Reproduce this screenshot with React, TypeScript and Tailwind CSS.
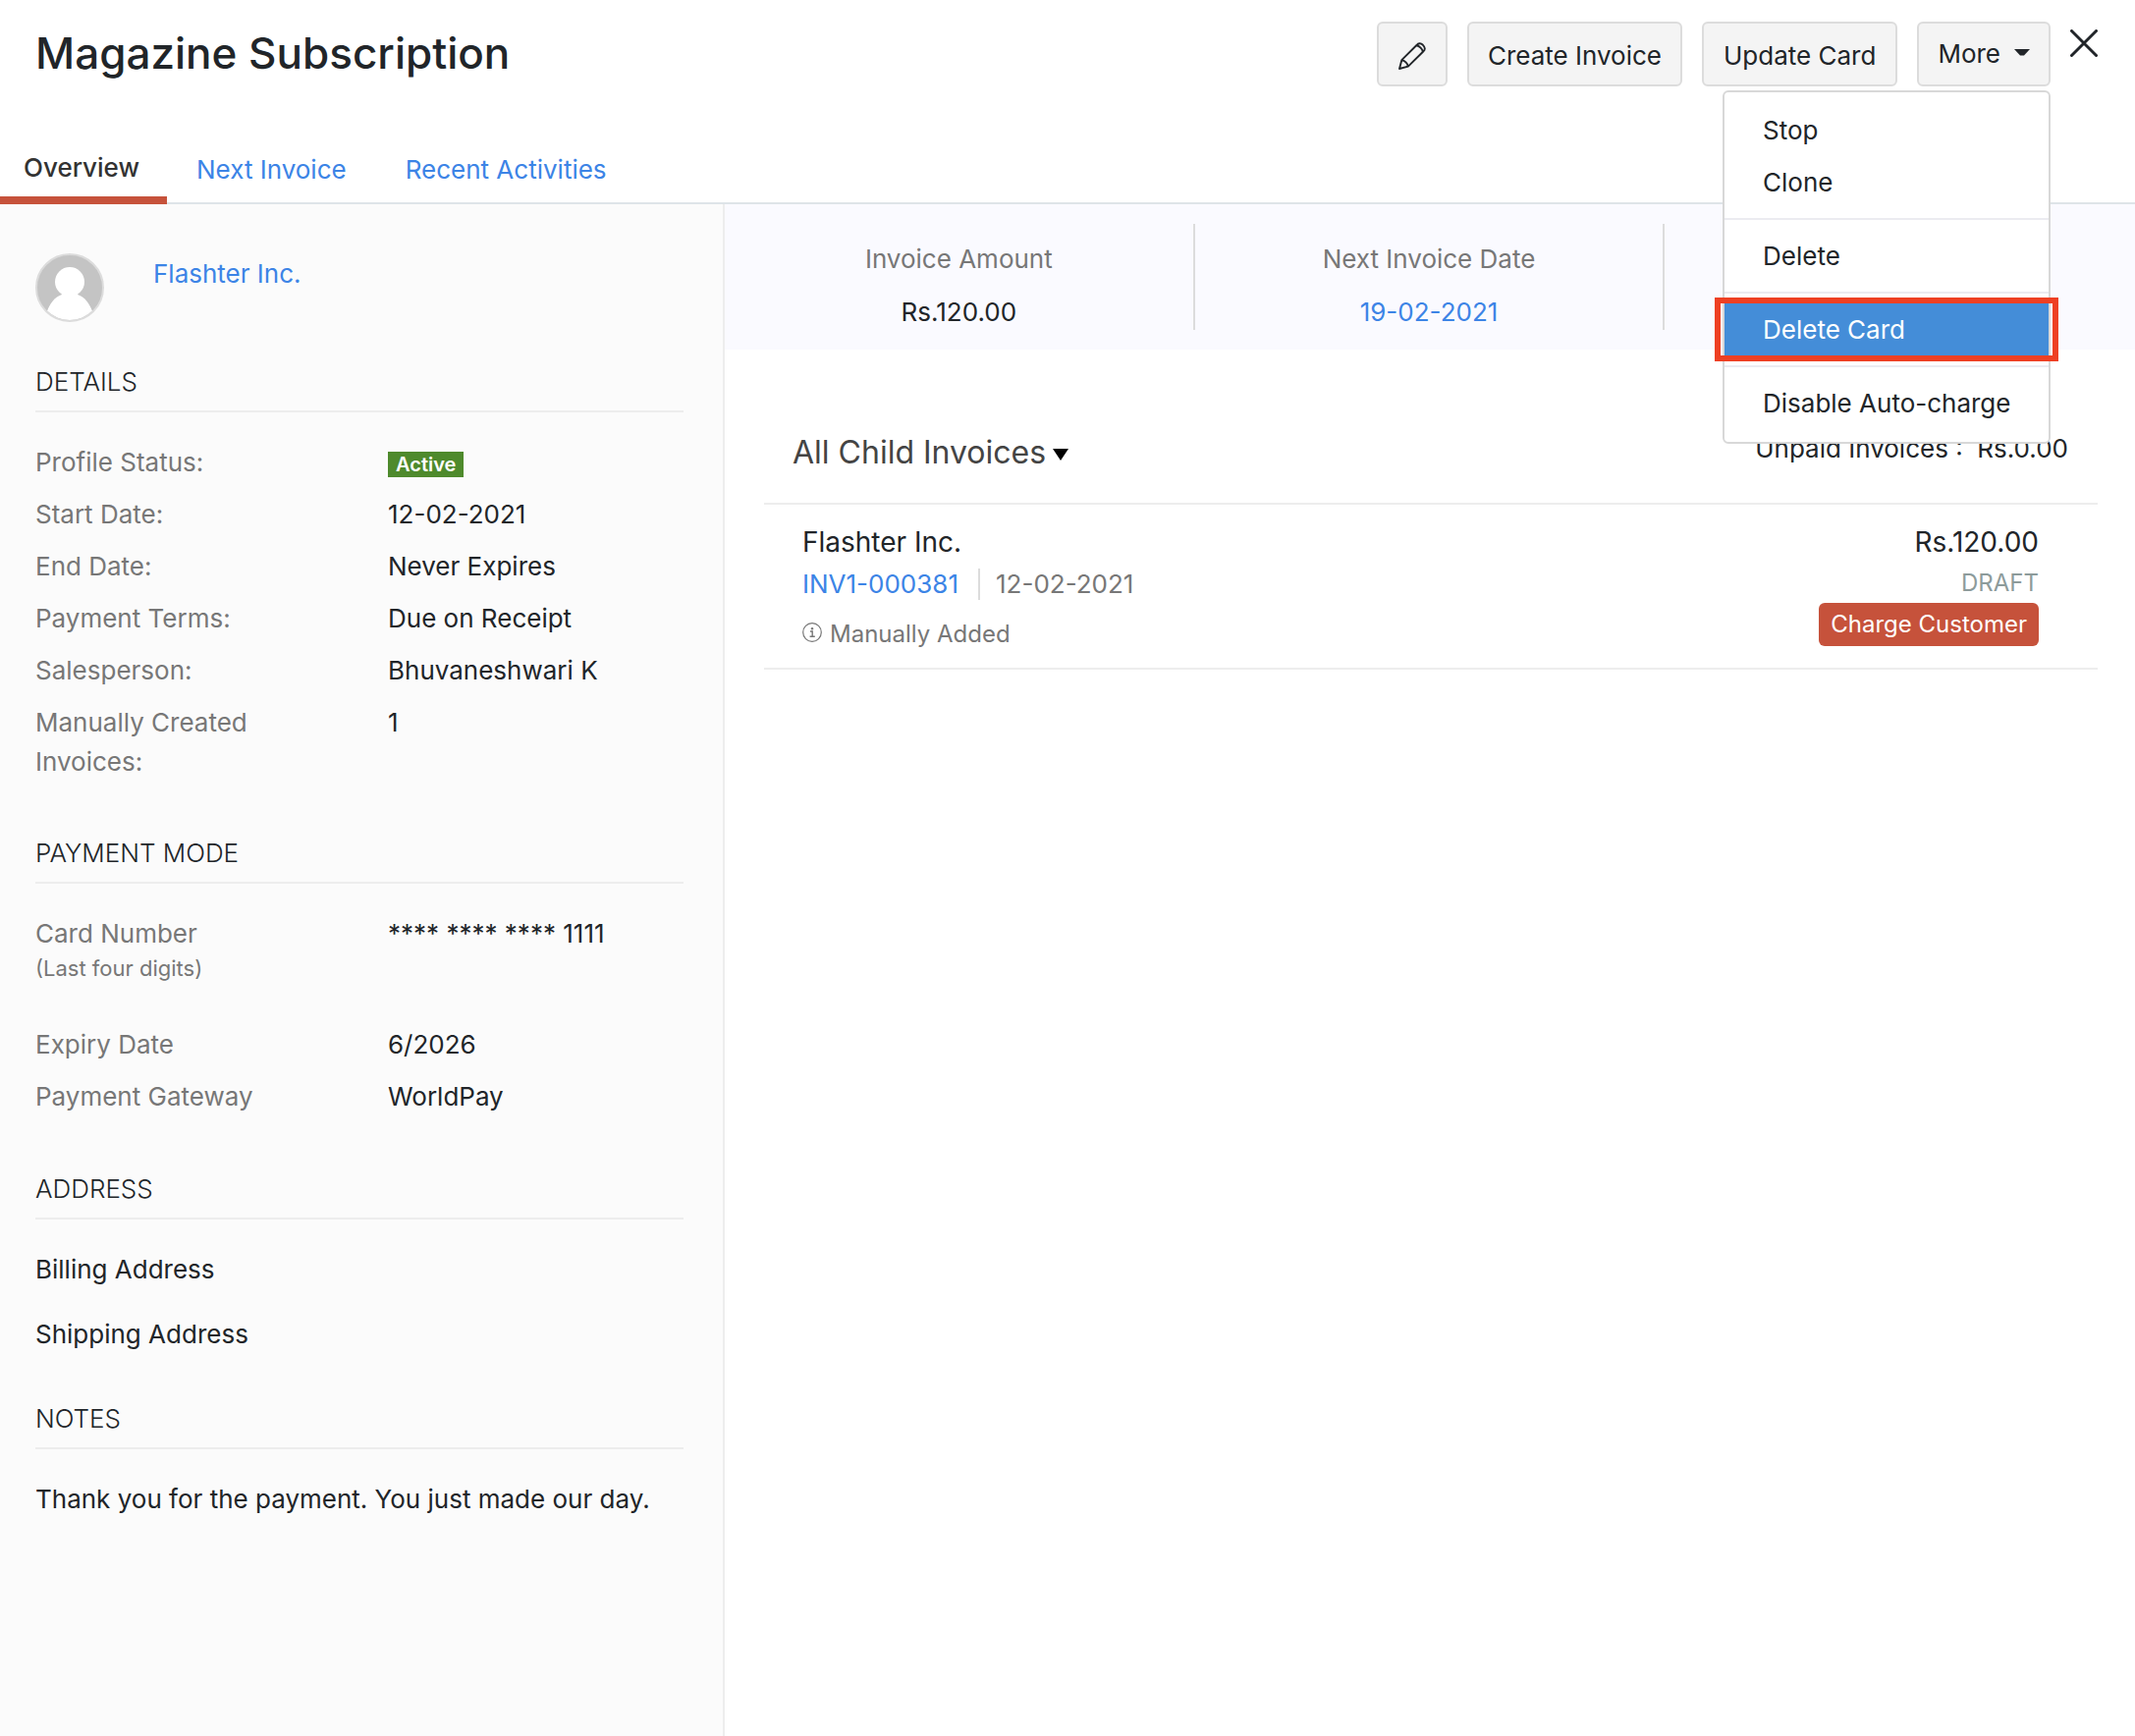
import type { ReactNode } from "react";

function PencilIcon() {
  return (
    <svg viewBox="0 0 28 28" className="h-7 w-7" fill="none" stroke="currentColor" strokeWidth="1.9" strokeLinejoin="round" aria-hidden="true">
      <path d="M1 27 3.3 18.2 18.5 3C20.3.8 22.6.6 24.9 2.8 27.3 5.200 27.500 7.500 25.200 9.500L9.900 24.700Z" />
      <path d="M3.300 18.200C6.300 18.600 9.300 21.600 9.900 24.700M18.300 3.300C21.400 3.800 24.400 6.800 24.900 9.800" />
    </svg>
  );
}

function CloseIcon() {
  return (
    <svg viewBox="0 0 28 28" className="h-7 w-7" fill="none" stroke="currentColor" strokeWidth="3" strokeLinecap="round" aria-hidden="true">
      <path d="M1.500 1.500 26.500 26.500M26.500 1.500 1.500 26.500" />
    </svg>
  );
}

function InfoIcon() {
  return (
    <svg viewBox="0 0 20 20" className="mb-1 h-5 w-5" fill="none" stroke="currentColor" aria-hidden="true">
      <circle cx="10" cy="10" r="9.300" strokeWidth="1.200" />
      <path d="M8 9H10.200V14.200M7.600 14.200H12.800" strokeWidth="1.400" />
      <circle cx="10" cy="6.200" r="1.200" fill="currentColor" stroke="none" />
    </svg>
  );
}

function Avatar() {
  return (
    <svg viewBox="0 0 70 70" className="h-[70px] w-[70px] shrink-0" role="img" aria-label="Customer">
      <defs>
        <clipPath id="avatar-clip">
          <circle cx="35" cy="35" r="33" />
        </clipPath>
      </defs>
      <circle cx="35" cy="35" r="34" fill="#c4c4c4" />
      <g clipPath="url(#avatar-clip)" fill="#fff">
        <circle cx="35" cy="29" r="15" />
        <path d="M27 40h16v2c8 3 12 9 15 17v11H12V59c3-8 7-14 15-17Z" />
      </g>
      <circle cx="35" cy="35" r="34" fill="none" stroke="#dcdcdc" strokeWidth="2" />
    </svg>
  );
}

const buttonClass =
  "flex h-[66px] items-center justify-center rounded-md border-2 border-[#dcdcdc] bg-[#f4f4f4] text-[#212529]";

function MenuItem({ children }: { children: ReactNode }) {
  return (
    <button type="button" role="menuitem" className="block h-[53px] w-full px-[39px] text-left leading-[54px] whitespace-nowrap">
      {children}
    </button>
  );
}

function MenuDivider() {
  return <div role="separator" className="my-[10px] h-[2px] bg-[#ebebf0]" />;
}

function MoreMenu() {
  return (
    <div role="menu" className="absolute top-full right-0 z-10 mt-1 w-[334px] rounded-md border-2 border-[#d8d8d8] bg-white pt-3 pb-[13px]">
      <MenuItem>Stop</MenuItem>
      <MenuItem>Clone</MenuItem>
      <MenuDivider />
      <MenuItem>Delete</MenuItem>
      <MenuDivider />
      <div className="relative bg-[#448dd8] text-white">
        <MenuItem>Delete Card</MenuItem>
        <div className="pointer-events-none absolute -inset-x-[10px] -inset-y-[6px] border-[6px] border-[#ee4023]" />
      </div>
      <MenuDivider />
      <MenuItem>Disable Auto-charge</MenuItem>
    </div>
  );
}

function Section({ title, children }: { title: string; children: ReactNode }) {
  return (
    <section>
      <h2 className="mb-[31px] border-b-2 border-[#ededed] pb-[9px] leading-10 font-light">{title}</h2>
      {children}
    </section>
  );
}

function Row({ label, children }: { label: ReactNode; children: ReactNode }) {
  return (
    <div className="flex leading-10">
      <dt className="w-[359px] shrink-0 pr-24 text-[#777]">{label}</dt>
      <dd>{children}</dd>
    </div>
  );
}

function Sidebar() {
  return (
    <aside className="w-[738px] shrink-0 border-r-2 border-[#ededed] bg-[#fbfbfb] pt-[50px] pr-10 pb-16 pl-9">
      <div className="mb-[41px] flex gap-[50px]">
        <Avatar />
        <a href="#customer" className="leading-[42px] text-[#3c84e6]">Flashter Inc.</a>
      </div>
      <Section title="DETAILS">
        <dl className="mb-[53px] flex flex-col gap-[13px]">
          <Row label="Profile Status:">
            <span className="inline-block bg-[#4e8a2c] px-2 align-middle text-[20px] leading-[26px] font-semibold text-white">Active</span>
          </Row>
          <Row label="Start Date:">12-02-2021</Row>
          <Row label="End Date:">Never Expires</Row>
          <Row label="Payment Terms:">Due on Receipt</Row>
          <Row label="Salesperson:">Bhuvaneshwari K</Row>
          <Row label="Manually Created Invoices:">1</Row>
        </dl>
      </Section>
      <Section title="PAYMENT MODE">
        <dl className="mb-[54px] flex flex-col gap-[13px]">
          <Row
            label={
              <>
                Card Number
                <span className="mb-[29px] block text-[22px] leading-[31px] whitespace-nowrap">(Last four digits)</span>
              </>
            }
          >
            **** **** **** 1111
          </Row>
          <Row label="Expiry Date">6/2026</Row>
          <Row label="Payment Gateway">WorldPay</Row>
        </dl>
      </Section>
      <Section title="ADDRESS">
        <div className="mb-[46px] flex flex-col gap-[26px] leading-10">
          <p>Billing Address</p>
          <p>Shipping Address</p>
        </div>
      </Section>
      <Section title="NOTES">
        <p className="leading-10">Thank you for the payment. You just made our day.</p>
      </Section>
    </aside>
  );
}

function Stats() {
  return (
    <div className="grid h-[148px] grid-cols-3 bg-[#fafaff] py-5 text-center leading-9">
      <div className="flex flex-col items-center justify-end gap-[18px] border-r-2 border-[#dcdcdc]">
        <p className="text-[#777]">Invoice Amount</p>
        <p>Rs.120.00</p>
      </div>
      <div className="flex flex-col items-center justify-end gap-[18px] border-r-2 border-[#dcdcdc]">
        <p className="text-[#777]">Next Invoice Date</p>
        <a href="#next-invoice" className="text-[#3c84e6]">19-02-2021</a>
      </div>
      <div />
    </div>
  );
}

export default function App() {
  return (
    <div className="flex min-h-screen flex-col bg-white font-['Inter',sans-serif] text-[26px] text-[#212529]">
      <header className="flex items-start justify-between pt-[22px] pr-[38px] pl-9">
        <h1 className="text-[44px] leading-[64px] font-medium">Magazine Subscription</h1>
        <div className="flex gap-5">
          <button type="button" aria-label="Edit" className={`${buttonClass} w-[72px] pt-1`}>
            <PencilIcon />
          </button>
          <button type="button" className={`${buttonClass} px-[19px] pt-[2px]`}>Create Invoice</button>
          <button type="button" className={`${buttonClass} px-5 pt-[2px]`}>Update Card</button>
          <div className="relative">
            <button type="button" aria-haspopup="menu" aria-expanded="true" className={`${buttonClass} gap-[14px] px-[19px] pb-[2px]`}>
              More
              <svg viewBox="0 0 16 8" className="h-2 w-4" fill="currentColor" aria-hidden="true">
                <path d="M0 0h16L10 6.500H6Z" />
              </svg>
            </button>
            <MoreMenu />
          </div>
          <button type="button" aria-label="Close" className="mt-2 h-7 w-7">
            <CloseIcon />
          </button>
        </div>
      </header>

      <nav className="mt-10 flex h-20 items-stretch border-b-2 border-[#dee4e8] leading-[68px]">
        <a href="#overview" className="-mb-[2px] border-b-8 border-[#c6523b] pt-[9px] pr-7 pl-6 font-medium text-[#333]">Overview</a>
        <a href="#next" className="px-[30px] pt-[11px] text-[#3c84e6]">Next Invoice</a>
        <a href="#activities" className="px-[30px] pt-[11px] text-[#3c84e6]">Recent Activities</a>
      </nav>

      <div className="flex grow">
        <Sidebar />
        <main className="min-w-0 grow">
          <Stats />
          <div className="mt-[78px] mr-[68px] ml-[69px] flex items-start justify-between">
            <button type="button" className="flex items-center gap-[7px] text-[32px] leading-[54px] text-[#444]">
              All Child Invoices
              <svg viewBox="0 0 16 12" className="mt-1 h-3 w-4" fill="#000" aria-hidden="true">
                <path d="M0 0h16L8 12Z" />
              </svg>
            </button>
            <p className="leading-[46px]">Unpaid Invoices :&nbsp; Rs.0.00</p>
          </div>
          <ul className="mt-6 mr-[38px] ml-10 border-t-2 border-[#ededed]">
            <li className="flex justify-between border-b-2 border-[#ededed] pt-[18px] pr-[60px] pb-[18px] pl-[39px]">
              <div>
                <p className="text-[28px] leading-10">Flashter Inc.</p>
                <div className="mt-[7px] flex h-8 items-center leading-8">
                  <a href="#invoice" className="border-r-2 border-[#dcdcdc] pr-5 text-[#3c84e6]">INV1-000381</a>
                  <span className="pl-4 text-[#777]">12-02-2021</span>
                </div>
                <p className="mt-[19px] flex items-center gap-2 text-[24px] leading-8 text-[#777]">
                  <InfoIcon />
                  Manually Added
                </p>
              </div>
              <div className="flex flex-col items-end">
                <p className="text-[28px] leading-10">Rs.120.00</p>
                <p className="mt-[6px] text-[24px] leading-8 text-[#8d9b9b]">DRAFT</p>
                <button type="button" className="mt-1 h-11 rounded-md bg-[#c6523b] px-3 text-[24px] leading-[42px] text-white">
                  Charge Customer
                </button>
              </div>
            </li>
          </ul>
        </main>
      </div>
    </div>
  );
}
